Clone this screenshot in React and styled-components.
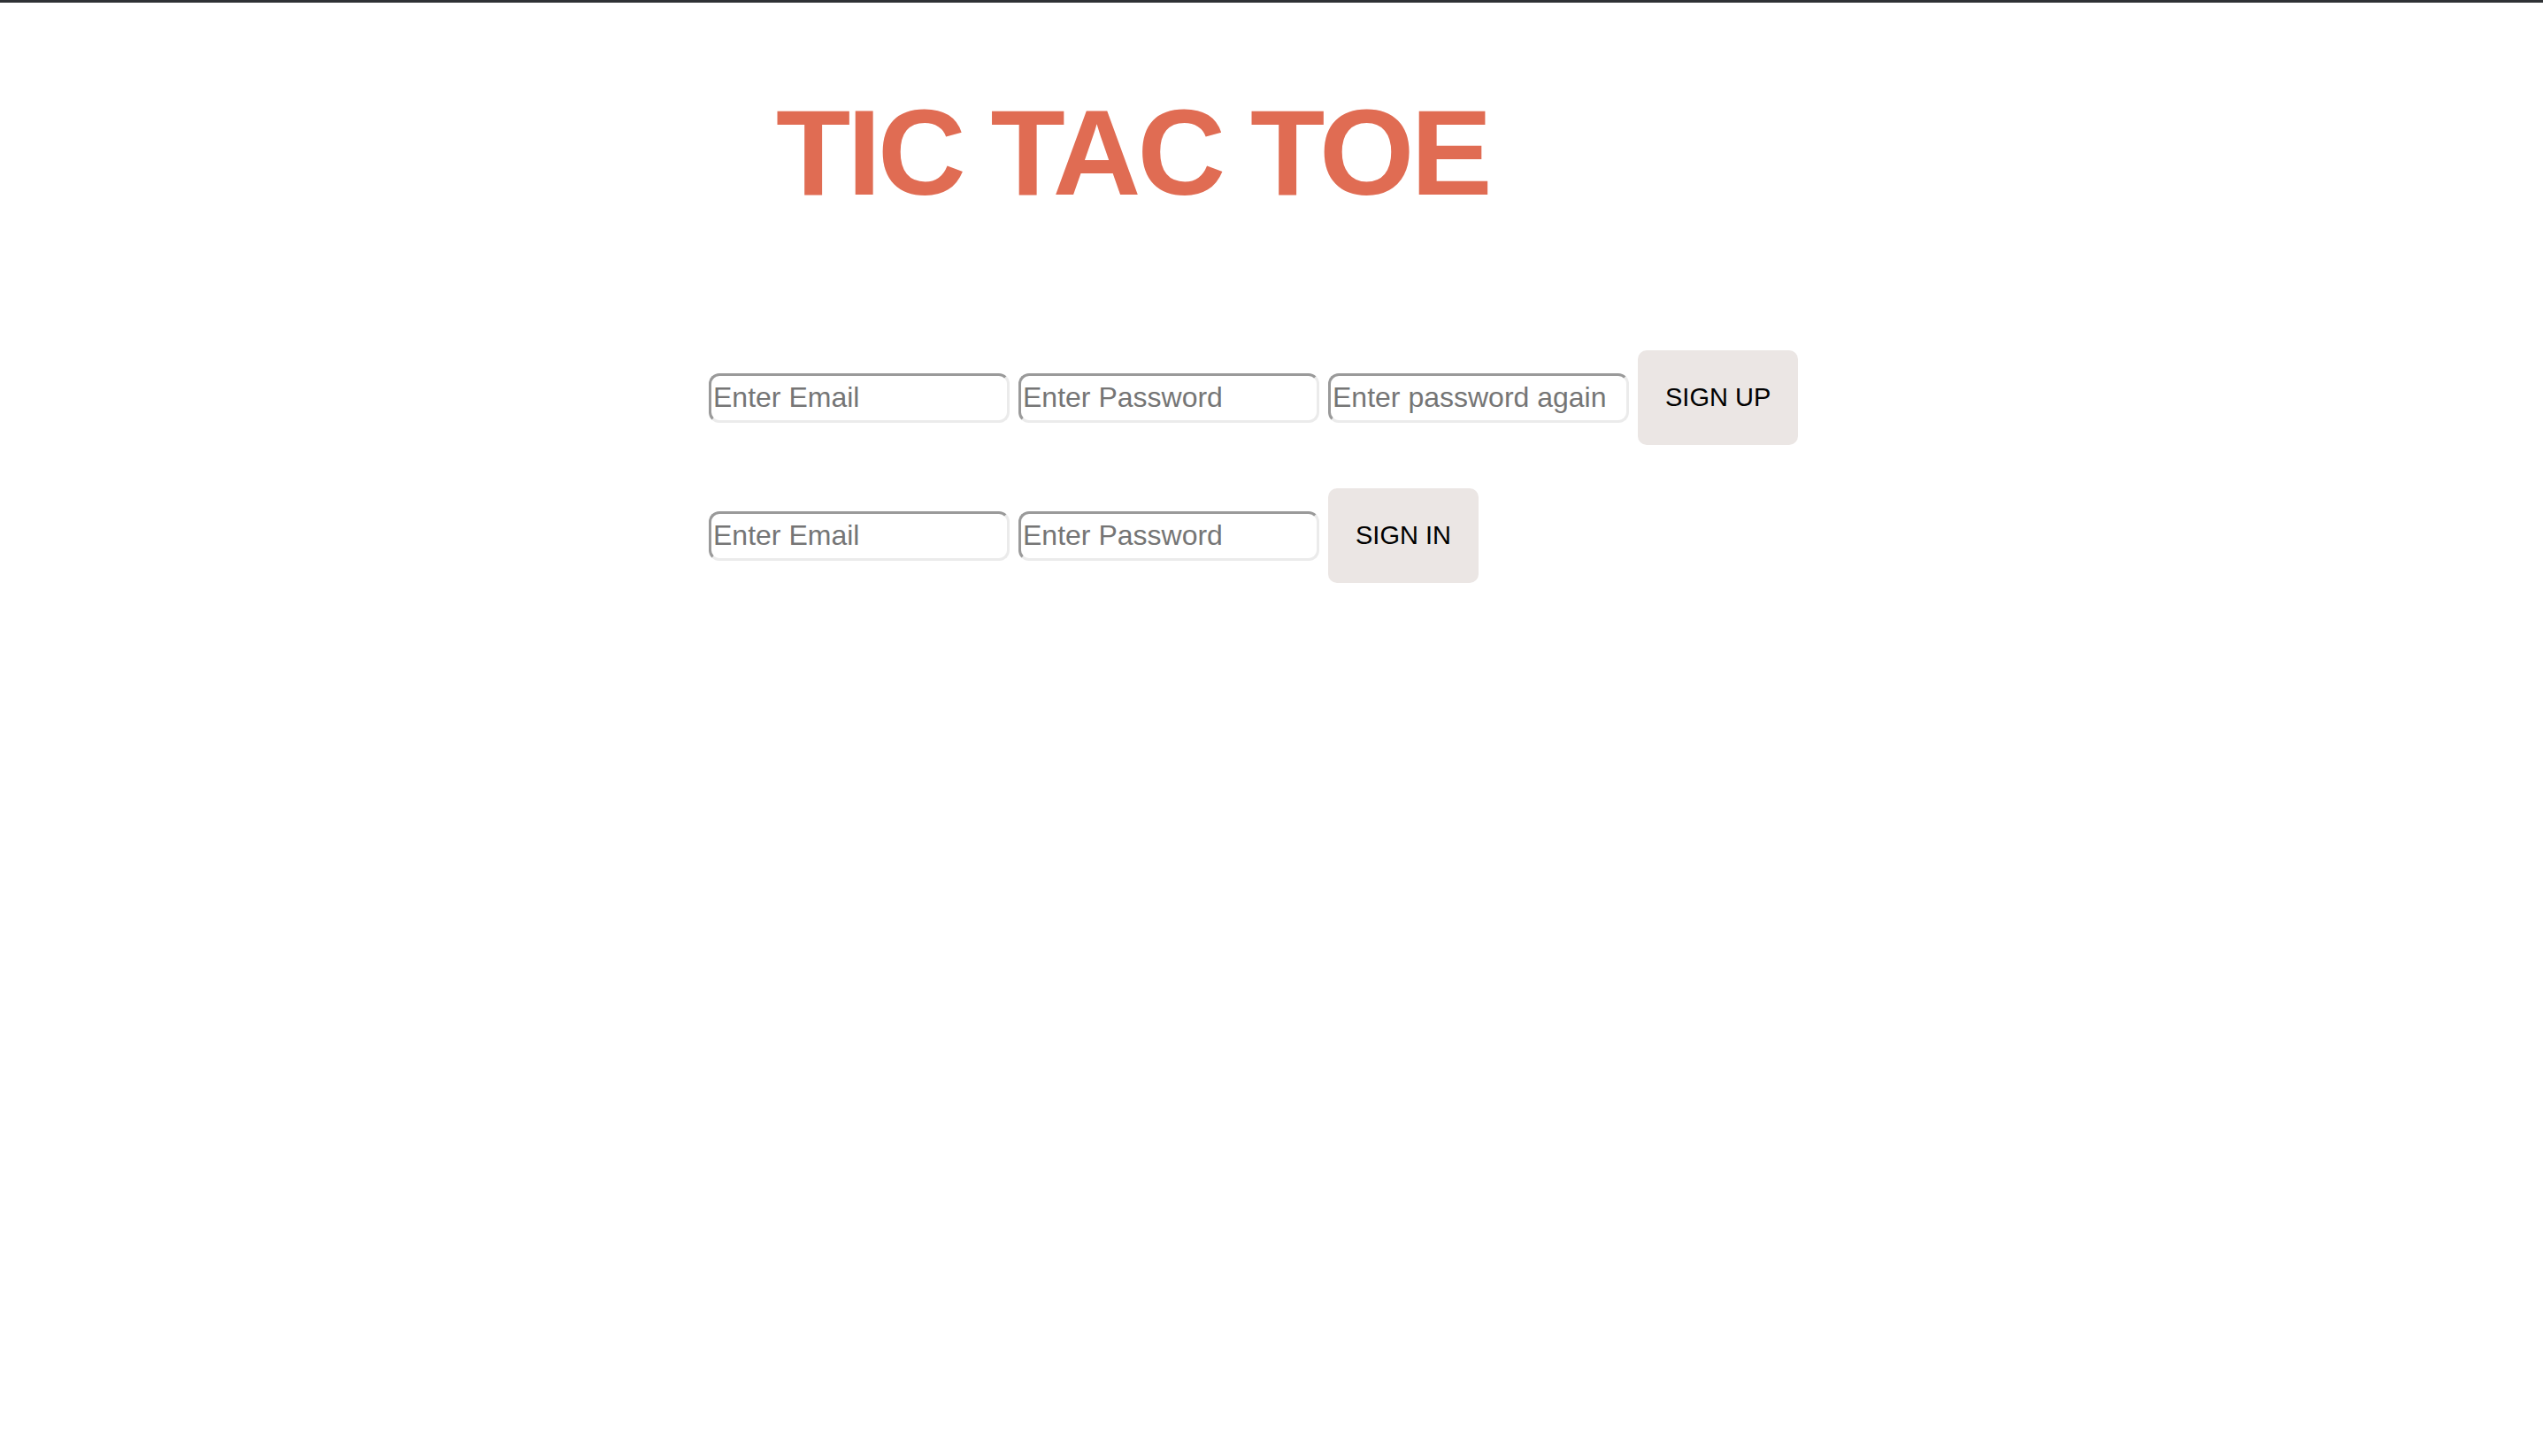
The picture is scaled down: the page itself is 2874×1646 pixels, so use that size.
import React from "react";
import styled, { createGlobalStyle } from "styled-components";

const GlobalStyle = createGlobalStyle`
  html, body {
    margin: 0;
    padding: 0;
    background: #ffffff;
    font-family: "Liberation Sans", Arial, sans-serif;
  }
  #root {
    min-height: 100vh;
  }
`;

const Page = styled.div`
  display: flex;
  flex-direction: column;
  min-height: 100vh;
`;

const TopBar = styled.div`
  height: 3px;
  background: #2f3235;
  flex-shrink: 0;
`;

const Title = styled.h1`
  margin: 100px 0 0 877px;
  font-family: "Liberation Sans", Arial, sans-serif;
  font-size: 138px;
  line-height: 138px;
  font-weight: 700;
  color: #e06c53;
  letter-spacing: -3.8px;
  word-spacing: -3px;
  white-space: nowrap;
`;

const Forms = styled.div`
  display: flex;
  flex-direction: column;
  gap: 49px;
  margin: 155px 0 0 801px;
`;

const FormRow = styled.form`
  display: flex;
  align-items: center;
  gap: 10px;
`;

const Field = styled.input`
  box-sizing: border-box;
  width: 340px;
  height: 56px;
  padding: 0 2px;
  border-style: solid;
  border-width: 3px;
  border-color: #9a9a9a #ebebeb #ebebeb #9a9a9a;
  border-radius: 12px;
  background: #ffffff;
  font-family: "Liberation Sans", Arial, sans-serif;
  font-size: 32px;
  color: #222;
  outline: none;

  &::placeholder {
    color: #757575;
    opacity: 1;
  }
`;

const ActionButton = styled.button`
  box-sizing: border-box;
  height: 107px;
  padding: 0 31px;
  border: none;
  border-radius: 10px;
  background: #ebe6e4;
  color: #000000;
  font-family: "Liberation Sans", Arial, sans-serif;
  font-size: 29px;
  cursor: pointer;
`;

export default function App() {
  return (
    <>
      <GlobalStyle />
      <Page>
        <TopBar />
        <Title>TIC TAC TOE</Title>
        <Forms>
          <FormRow onSubmit={(e) => e.preventDefault()}>
            <Field type="email" placeholder="Enter Email" />
            <Field type="password" placeholder="Enter Password" />
            <Field type="password" placeholder="Enter password again" />
            <ActionButton type="submit">SIGN UP</ActionButton>
          </FormRow>
          <FormRow onSubmit={(e) => e.preventDefault()}>
            <Field type="email" placeholder="Enter Email" />
            <Field type="password" placeholder="Enter Password" />
            <ActionButton type="submit">SIGN IN</ActionButton>
          </FormRow>
        </Forms>
      </Page>
    </>
  );
}
